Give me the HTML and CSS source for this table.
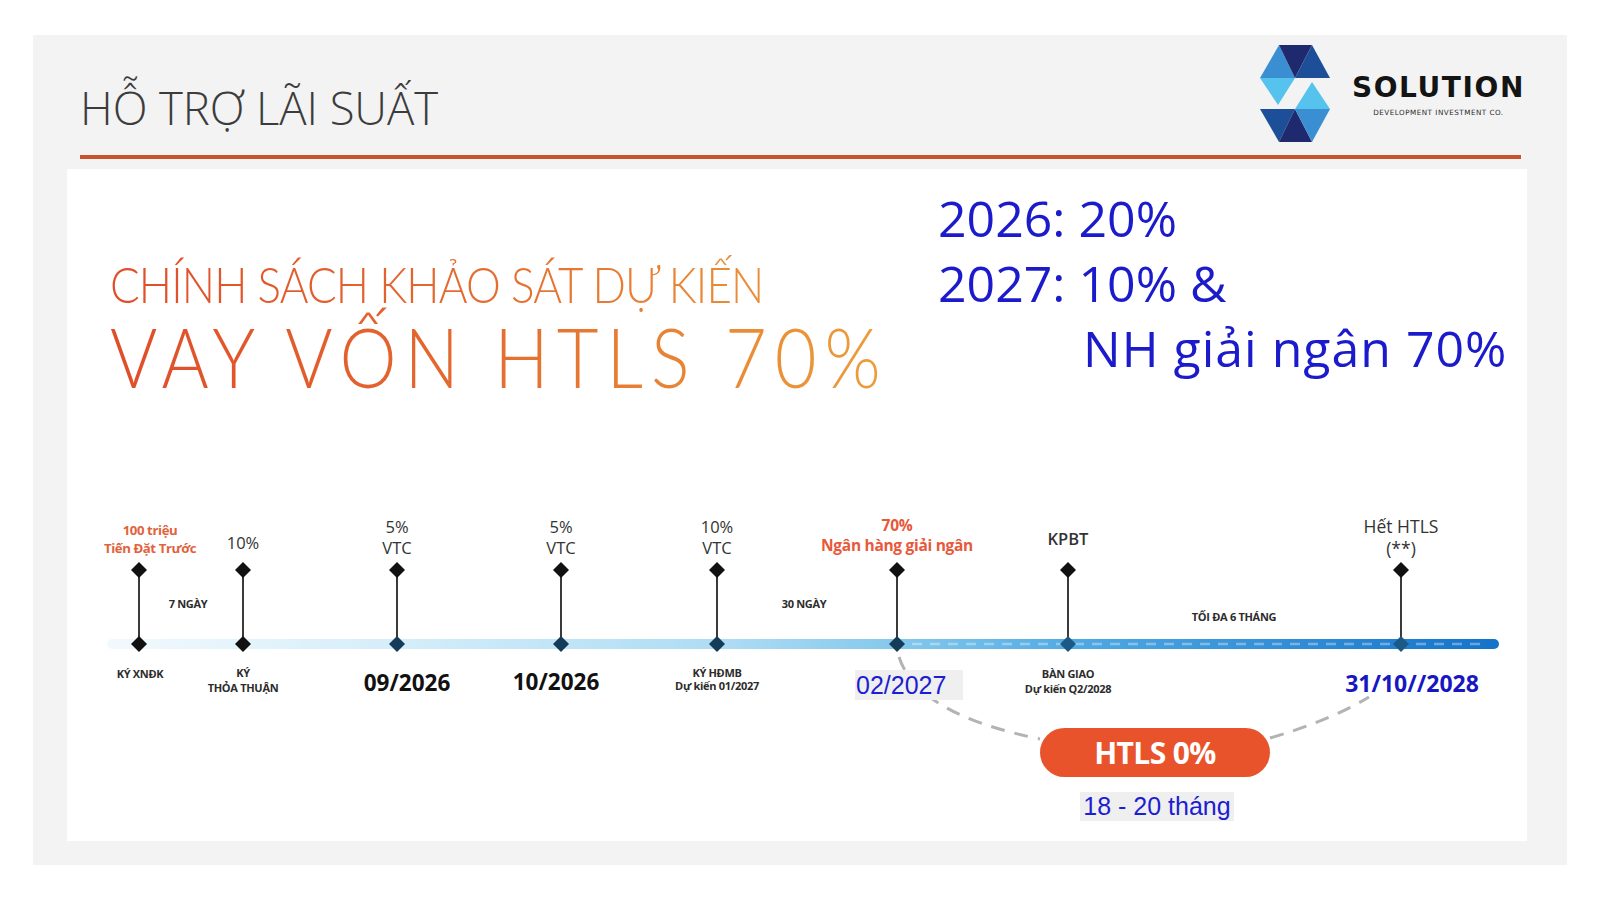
FILE: index.html
```html
<!DOCTYPE html>
<html lang="vi">
<head>
<meta charset="utf-8">
<title>Hỗ trợ lãi suất</title>
<link rel="stylesheet" href="styles.css">
</head>
<body>
<div class="slide">
  <header class="header">
    <h1 class="title">HỖ TRỢ LÃI SUẤT</h1>
    <div class="logo">
      <svg class="logo-mark" width="70" height="97" viewBox="0 0 70 97">
        <polygon points="0,33 19,0 35,33" fill="#3a8fd2"/>
        <polygon points="19,0 52,0 35,33" fill="#1f2a6e"/>
        <polygon points="52,0 70,33 35,33" fill="#1d4f98"/>
        <polygon points="0,33 35,33 18,60" fill="#56c3ef"/>
        <polygon points="52,37 35,64 70,64" fill="#56c3ef"/>
        <polygon points="0,64 35,64 19,97" fill="#1d4f98"/>
        <polygon points="35,64 19,97 52,97" fill="#1f2a6e"/>
        <polygon points="35,64 70,64 52,97" fill="#3a8fd2"/>
      </svg>
      <div class="logo-text">
        <div class="logo-name">SOLUTION</div>
        <div class="logo-sub">DEVELOPMENT INVESTMENT CO.</div>
      </div>
    </div>
  </header>
  <div class="rule"></div>
  <main class="panel">
    <section class="top">
      <div class="headline">
        <div class="hl-grad">
          <div class="hl-1">CHÍNH SÁCH KHẢO SÁT DỰ KIẾN</div>
          <div class="hl-2">VAY VỐN HTLS 70%</div>
        </div>
      </div>
      <div class="schedule">
        <div>2026: 20%</div>
        <div>2027: 10% &amp;</div>
        <div class="indent">NH giải ngân 70%</div>
      </div>
    </section>
    <section class="timeline">
      <svg class="tl-svg" width="1460" height="352" viewBox="0 0 1460 352">
        <defs>
          <linearGradient id="bar" x1="0" y1="0" x2="1" y2="0">
            <stop offset="0" stop-color="#f2f9fd"/>
            <stop offset="0.2" stop-color="#d6eefa"/>
            <stop offset="0.45" stop-color="#acdbf3"/>
            <stop offset="0.58" stop-color="#7fc6ec"/>
            <stop offset="0.7" stop-color="#4fa8e2"/>
            <stop offset="1" stop-color="#1473ca"/>
          </linearGradient>
        </defs>
        <path class="curve" d="M832 168 Q850 225 973 250"/>
        <path class="curve" d="M1203 249 Q1262 232 1302 208"/>
        <rect x="40" y="150" width="1392" height="10" rx="5" fill="url(#bar)"/>
        <line class="bar-dash" x1="845" y1="155" x2="1420" y2="155"/>
        <g class="stems">
          <line x1="72" y1="81" x2="72" y2="155"/>
          <line x1="176" y1="81" x2="176" y2="155"/>
          <line x1="330" y1="81" x2="330" y2="155"/>
          <line x1="494" y1="81" x2="494" y2="155"/>
          <line x1="650" y1="81" x2="650" y2="155"/>
          <line x1="830" y1="81" x2="830" y2="155"/>
          <line x1="1001" y1="81" x2="1001" y2="155"/>
          <line x1="1334" y1="81" x2="1334" y2="155"/>
        </g>
        <g fill="#111">
          <polygon points="72,73 80,81 72,89 64,81"/>
          <polygon points="176,73 184,81 176,89 168,81"/>
          <polygon points="330,73 338,81 330,89 322,81"/>
          <polygon points="494,73 502,81 494,89 486,81"/>
          <polygon points="650,73 658,81 650,89 642,81"/>
          <polygon points="830,73 838,81 830,89 822,81"/>
          <polygon points="1001,73 1009,81 1001,89 993,81"/>
          <polygon points="1334,73 1342,81 1334,89 1326,81"/>
          <polygon points="72,147 80,155 72,163 64,155"/>
          <polygon points="176,147 184,155 176,163 168,155"/>
        </g>
        <g fill="#143c58">
          <polygon points="330,147 338,155 330,163 322,155"/>
          <polygon points="494,147 502,155 494,163 486,155"/>
          <polygon points="650,147 658,155 650,163 642,155"/>
          <polygon points="830,147 838,155 830,163 822,155"/>
        </g>
        <g fill="#1b5a86">
          <polygon points="1001,147 1009,155 1001,163 993,155"/>
          <polygon points="1334,147 1342,155 1334,163 1326,155"/>
        </g>
      </svg>

      <div class="lbl orange-s l-100">100 triệu<br>Tiến Đặt Trước</div>
      <div class="lbl pct l-10a">10%</div>
      <div class="lbl pct l-5a">5%<br>VTC</div>
      <div class="lbl pct l-5b">5%<br>VTC</div>
      <div class="lbl pct l-10b">10%<br>VTC</div>
      <div class="lbl orange-m l-70">70%<br>Ngân hàng giải ngân</div>
      <div class="lbl pct kpbt l-kpbt">KPBT</div>
      <div class="lbl pct l-het">Hết HTLS<br>(**)</div>

      <div class="lbl tiny l-7">7 NGÀY</div>
      <div class="lbl tiny l-30">30 NGÀY</div>
      <div class="lbl tiny l-6t">TỐI ĐA 6 THÁNG</div>

      <div class="lbl tiny l-xndk">KÝ XNĐK</div>
      <div class="lbl tiny two l-tt">KÝ<br>THỎA THUẬN</div>
      <div class="lbl date l-0926">09/2026</div>
      <div class="lbl date l-1026">10/2026</div>
      <div class="lbl tiny two-s l-hdmb">KÝ HĐMB<br>Dự kiến 01/2027</div>
      <div class="boxed d-0227">02/2027</div>
      <div class="lbl tiny two l-bg">BÀN GIAO<br>Dự kiến Q2/2028</div>
      <div class="lbl date blue l-end">31/10//2028</div>

      <div class="pill">HTLS 0%</div>
      <div class="boxed d-months">18 - 20 tháng</div>
    </section>
  </main>
</div>
</body>
</html>
```
FILE: styles.css
```css
* { box-sizing: border-box; }
html, body { margin: 0; padding: 0; background: #ffffff; }
body { font-family: "Open Sans", "Noto Sans", sans-serif; color: #333; }

.slide {
  width: 1534px;
  height: 830px;
  margin: 35px 0 0 33px;
  background: #f3f3f3;
  display: flex;
  flex-direction: column;
}

.header {
  height: 120px;
  display: flex;
  justify-content: space-between;
  align-items: flex-start;
  padding-left: 47px;
}
.title {
  margin: 42px 0 0 0;
  font-family: "Open Sans", sans-serif;
  font-weight: 300;
  font-size: 45.5px;
  line-height: 60px;
  color: #3c3c3c;
  letter-spacing: -0.1px;
}
.logo {
  display: flex;
  align-items: flex-start;
  gap: 22px;
  margin: 10px 42px 0 0;
}
.logo-mark { display: block; }
.logo-text {
  margin-top: 29px;
  text-align: center;
}
.logo-name {
  font-family: "DejaVu Sans", sans-serif;
  font-weight: 700;
  font-size: 28px;
  line-height: 28px;
  letter-spacing: 1.6px;
  color: #141414;
}
.logo-sub {
  margin-top: 6px;
  font-family: "DejaVu Sans", sans-serif;
  font-size: 7.2px;
  line-height: 10px;
  letter-spacing: 0.5px;
  color: #2a2a2a;
}

.rule {
  height: 4px;
  margin: 0 46px 0 47px;
  background: #c9532f;
}

.panel {
  margin: 10px 40px 0 34px;
  height: 672px;
  background: #ffffff;
  display: flex;
  flex-direction: column;
}

.top {
  height: 320px;
  display: grid;
  grid-template-columns: 871px 1fr;
}
.headline { padding: 85px 0 0 43px; }
.hl-grad {
  display: inline-block;
  font-family: "Lato", sans-serif;
  font-weight: 300;
  color: transparent;
  background: linear-gradient(90deg, #df4d29 0%, #e4692f 45%, #ec9e3b 100%);
  -webkit-background-clip: text;
  background-clip: text;
  transform-origin: left top;
  transform: scaleX(0.88);
  white-space: nowrap;
}
.hl-1 { font-size: 50px; line-height: 60px; letter-spacing: -1px; }
.hl-2 { font-size: 82px; line-height: 84px; letter-spacing: 9px; }

.schedule {
  padding-top: 17px;
  font-family: "Open Sans", sans-serif;
  font-size: 50px;
  line-height: 65px;
  color: #1b1bcc;
  white-space: nowrap;
}
.indent { padding-left: 145px; letter-spacing: 1px; }

.timeline {
  position: relative;
  height: 352px;
}
.tl-svg { position: absolute; left: 0; top: 0; }
.curve { fill: none; stroke: #b3b3b3; stroke-width: 3; stroke-dasharray: 14 10; }
.bar-dash { stroke: rgba(255,255,255,0.35); stroke-width: 2.5; stroke-dasharray: 10 8; }
.stems line { stroke: #3a3a3a; stroke-width: 2; }

.lbl {
  position: absolute;
  transform: translateX(-50%);
  white-space: nowrap;
  text-align: center;
}
.orange-s {
  font-weight: 700;
  font-size: 13.2px;
  line-height: 18px;
  letter-spacing: -0.4px;
  color: #e0633c;
}
.orange-m {
  font-weight: 700;
  font-size: 15.5px;
  line-height: 20px;
  letter-spacing: -0.3px;
  color: #e8583a;
}
.pct {
  font-size: 16.5px;
  line-height: 21px;
  color: #333;
}
.kpbt { font-weight: 600; }
.tiny {
  font-weight: 700;
  font-size: 11px;
  line-height: 12px;
  letter-spacing: -0.3px;
  color: #2c2c2c;
}
.two { line-height: 15px; }
.two-s { line-height: 13px; }
.date {
  font-weight: 700;
  font-size: 22.5px;
  line-height: 30px;
  color: #111;
}
.blue { color: #1717c2; }

.l-100 { left: 83px; top: 32px; }
.l-10a { left: 176px; top: 43px; }
.l-5a { left: 330px; top: 27px; }
.l-5b { left: 494px; top: 27px; }
.l-10b { left: 650px; top: 27px; }
.l-70 { left: 830px; top: 26px; }
.l-kpbt { left: 1001px; top: 39px; }
.l-het { left: 1334px; top: 26px; line-height: 22px; font-size: 17.5px; }

.l-7 { left: 121px; top: 109px; }
.l-30 { left: 737px; top: 109px; }
.l-6t { left: 1167px; top: 122px; }

.l-xndk { left: 73px; top: 179px; }
.l-tt { left: 176px; top: 176px; }
.l-0926 { left: 340px; top: 179px; }
.l-1026 { left: 489px; top: 178px; }
.l-hdmb { left: 650px; top: 177px; }
.l-bg { left: 1001px; top: 177px; }
.l-end { left: 1345px; top: 179px; font-size: 23px; }

.boxed {
  position: absolute;
  background: #efefef;
  font-family: "Liberation Sans", Arial, sans-serif;
  font-size: 25px;
  color: #1d1dd2;
  white-space: nowrap;
}
.d-0227 {
  left: 788px;
  top: 181px;
  width: 108px;
  height: 30px;
  line-height: 30px;
  padding-left: 1px;
}
.d-months {
  left: 1013px;
  top: 303px;
  width: 154px;
  height: 29px;
  line-height: 29px;
  text-align: center;
}

.pill {
  position: absolute;
  left: 973px;
  top: 239px;
  width: 230px;
  height: 49px;
  border-radius: 25px;
  background: #e9532b;
  color: #ffffff;
  font-family: "Open Sans", sans-serif;
  font-weight: 700;
  font-size: 30px;
  line-height: 49px;
  letter-spacing: -0.6px;
  text-align: center;
}
```
